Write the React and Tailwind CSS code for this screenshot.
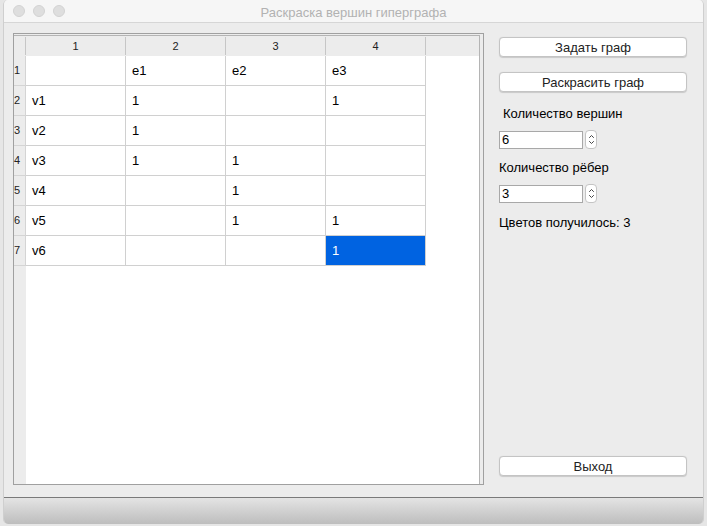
import React from 'react'

const rows = [
  ['', 'e1', 'e2', 'e3'],
  ['v1', '1', '', '1'],
  ['v2', '1', '', ''],
  ['v3', '1', '1', ''],
  ['v4', '', '1', ''],
  ['v5', '', '1', '1'],
  ['v6', '', '', '1'],
]

const Button = ({ children }) => (
  <button className="h-[20px] w-full rounded-[4px] border border-[#c4c4c4] bg-white text-[13px] leading-none text-[#222] shadow-[0_0.5px_1px_rgba(0,0,0,0.15)]">
    {children}
  </button>
)

const SpinBox = ({ value }) => (
  <div className="flex items-center gap-[2px]">
    <div className="flex h-[18px] w-[84px] items-center border border-[#a8a8a8] bg-white pl-[2px] text-[13px]">{value}</div>
    <div className="flex h-[19px] w-[12px] flex-col items-center justify-center rounded-[4px] border border-[#c4c4c4] bg-white">
      <svg width="7" height="13" viewBox="0 0 7 13" fill="none" stroke="#444" strokeWidth="1" strokeLinecap="round" strokeLinejoin="round">
        <path d="M1.5 4.5 L3.5 2.5 L5.5 4.5" />
        <path d="M1.5 8.5 L3.5 10.5 L5.5 8.5" />
      </svg>
    </div>
  </div>
)

const App = () => {
  return (
    <div className="h-[526px] w-[707px] bg-[#e6e6e6] px-[3px] font-['Liberation_Sans',Arial,sans-serif] text-black">
      <div className="flex h-[524px] flex-col overflow-hidden rounded-[5px] border-x border-[#cfcfcf] bg-[#ececec]">
        {/* title bar */}
        <div className="relative flex h-[23px] shrink-0 items-center border-b border-[#d6d6d6] bg-[#f6f6f6]">
          <div className="flex gap-[8px] pl-[9px]">
            <span className="h-[12px] w-[12px] rounded-full border border-[#d2d2d2] bg-[#dedede]" />
            <span className="h-[12px] w-[12px] rounded-full border border-[#d2d2d2] bg-[#dedede]" />
            <span className="h-[12px] w-[12px] rounded-full border border-[#d2d2d2] bg-[#dedede]" />
          </div>
          <div className="absolute inset-x-0 top-[3px] text-center text-[13px] text-[#b2b2b2]">Раскраска вершин гиперграфа</div>
        </div>

        {/* content */}
        <div className="flex flex-1 pl-[9px] pr-[15px] pt-[10px] pb-[12px]">
          <div className="flex w-[471px] flex-col border border-[#a0a0a0]">
            <div className="mr-[3px] mt-[1px] flex flex-1 flex-col border-t border-r border-[#b4b4b4] bg-white">
              {/* header */}
              <div className="flex h-[20px] shrink-0 bg-[#ececec] text-[11px] text-[#222]">
                <div className="my-[1px] flex w-[12px] items-center border-r border-[#c6c6c6]" />
                {['1', '2', '3', '4'].map((h) => (
                  <div key={h} className="my-[1px] flex w-[100px] items-center justify-center border-r border-[#c6c6c6]">{h}</div>
                ))}
              </div>
              {rows.map((r, i) => (
                <div key={i} className="flex h-[30px] shrink-0">
                  <div className="flex w-[12px] items-center border-b border-r border-[#d4d4d4] bg-[#ececec] text-[11px] text-[#222]">{i + 1}</div>
                  {r.map((c, j) => {
                    const sel = i === 6 && j === 3
                    return (
                      <div
                        key={j}
                        className={`flex w-[100px] items-center border-b border-r border-[#d0d0d0] pl-[6px] text-[13px] ${sel ? 'bg-[#0063e1] text-white' : 'text-black'}`}
                      >
                        {c}
                      </div>
                    )
                  })}
                </div>
              ))}
              <div className="flex flex-1">
                <div className="w-[12px] bg-[#ececec]" />
              </div>
            </div>
          </div>

          {/* right panel */}
          <div className="ml-[15px] flex w-[188px] flex-col pt-[4px] text-[13px]">
            <Button>Задать граф</Button>
            <div className="mt-[15px]">
              <Button>Раскрасить граф</Button>
            </div>
            <div className="mt-[14px] pl-[4px] leading-[16px]">Количество вершин</div>
            <div className="mt-[8px]">
              <SpinBox value="6" />
            </div>
            <div className="mt-[11px] leading-[16px]">Количество рёбер</div>
            <div className="mt-[8px]">
              <SpinBox value="3" />
            </div>
            <div className="mt-[12px] leading-[16px]">Цветов получилось: 3</div>
            <div className="mt-auto mb-[9px]">
              <Button>Выход</Button>
            </div>
          </div>
        </div>

        {/* status bar */}
        <div className="h-[27px] shrink-0 border-t border-[#7a7a7a] bg-gradient-to-b from-[#e4e4e4] to-[#bdbdbd]" />
      </div>
    </div>
  )
}

export default App
